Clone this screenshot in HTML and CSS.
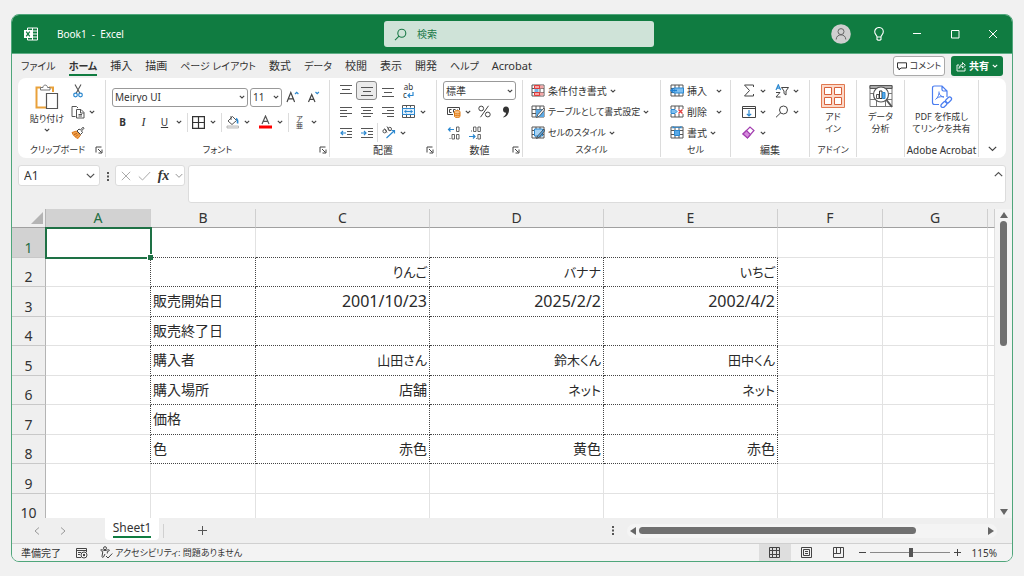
FILE: index.html
```html
<!DOCTYPE html>
<html lang="ja">
<head>
<meta charset="utf-8">
<title>Book1 - Excel</title>
<meta name="viewport" content="width=device-width, initial-scale=1">
<link rel="stylesheet" href="styles.css">
</head>
<body>
<svg class="defs" aria-hidden="true">
  <symbol id="chev" viewBox="0 0 6 4"><path d="M.8 .8 3 3 5.2 .8" fill="none" stroke="currentColor" stroke-width="1.1"/></symbol>
  <symbol id="launch" viewBox="0 0 8 8"><path d="M1 6.5V1h5.5M3 3l3.5 3.5M7 3.5V7H3.5" fill="none" stroke="#444" stroke-width="1"/></symbol>
  <symbol id="gridpad" viewBox="0 0 14 13"><path d="M1 1h12v11H1zM1 4.5h12M1 8.5h12M5 1v11M9 1v11" fill="#fff" stroke="#555"/></symbol>
</svg>
<div class="window">
  <header class="titlebar">
    <div class="title">
      <svg width="14" height="14" viewBox="0 0 14 14"><path d="M3.5 1h10v12h-10zM8.5 1v12M3.5 4h10M3.5 7h10M3.5 10h10" fill="none" stroke="#fff"/><path d="M0 3h8v8H0z" fill="#fff"/><path d="M2.2 4.6 5.8 9.4M5.8 4.6 2.2 9.4" stroke="#107c41" stroke-width="1.2"/></svg>
      <h1>Book1&nbsp; -&nbsp; Excel</h1>
    </div>
    <label class="search">
      <svg width="13" height="13" viewBox="0 0 13 13"><path d="M5 8.2 1 12.2" /><circle cx="7.8" cy="5.2" r="4"/></svg>
      <input type="search" placeholder="検索" aria-label="検索">
    </label>
    <div class="syscontrols">
      <button aria-label="アカウント"><svg width="20" height="20" viewBox="0 0 20 20"><circle cx="10" cy="10" r="9.8" fill="#cfcfcf"/><circle cx="10" cy="7.6" r="3" fill="none" stroke="#666"/><path d="M5.2 15.5c0-6.200 9.600-6.200 9.600 0" fill="none" stroke="#666"/></svg></button>
      <button aria-label="ヒント"><svg width="12" height="14" viewBox="0 0 12 14"><path d="M4 10C4 8 1.700 7.500 1.700 4.800a4.300 4.300 0 0 1 8.600 0C10.300 7.500 8 8 8 10zM4 10v2.500q2 1.500 4 0V10" fill="none" stroke="#fff" stroke-width="1.100"/></svg></button>
      <button aria-label="最小化"><svg width="10" height="10"><path d="M1 4.500h8" stroke="#fff"/></svg></button>
      <button aria-label="最大化"><svg width="10" height="10"><path d="M1.500 1.500h7.500v7.500h-7.500z" stroke="#fff" fill="none"/></svg></button>
      <button aria-label="閉じる"><svg width="10" height="10"><path d="M1 1l8 8M9 1 1 9" stroke="#fff"/></svg></button>
    </div>
  </header>

  <div class="tabs">
    <nav>
      <a href="#" class="kana">ファイル</a>
      <a href="#" class="kana current">ホーム</a>
      <a href="#">挿入</a>
      <a href="#">描画</a>
      <a href="#" class="kana">ページ レイアウト</a>
      <a href="#">数式</a>
      <a href="#" class="kana">データ</a>
      <a href="#">校閲</a>
      <a href="#">表示</a>
      <a href="#">開発</a>
      <a href="#" class="kana">ヘルプ</a>
      <a href="#">Acrobat</a>
    </nav>
    <button class="comment"><svg width="10" height="9" viewBox="0 0 10 9"><path d="M.5 .8h9v5.200H4L2 8V6H.5z" fill="none" stroke="#333"/></svg>コメント</button>
    <button class="share"><svg width="10" height="11" viewBox="0 0 10 11"><path d="M3 4H1v6h8V7M3 7.500C3 5 4.500 3.500 6.500 3.500V1.500L9.300 4.300 6.500 7V5.200C5 5.200 4 6 3 7.500z" fill="none" stroke="#fff" stroke-width=".9"/></svg>共有<svg class="chev"><use href="#chev"/></svg></button>
  </div>

  <div class="ribbon">
    <section class="group clipboard">
      <div class="tools">
        <button class="big">
          <svg width="24" height="26" viewBox="0 0 24 26"><path d="M6 3.500H1.500v20H12M14 3.500h4V8" fill="none" stroke="#e9a13a" stroke-width="2"/><path d="M5.500 6V3.500H8C8 .3 12.500 .3 12.500 3.500H15V6z" fill="#fff" stroke="#777"/><path d="M11.500 9.500h11v15h-11z" fill="#fff" stroke="#555" stroke-width="1.200"/></svg>
          <span>貼り付け</span><svg class="chev"><use href="#chev"/></svg>
        </button>
        <div class="rows">
          <div class="row"><button class="slot" aria-label="切り取り"><svg width="10" height="14" viewBox="0 0 10 14"><path d="M2 .5 7 9.500M8 .5 3 9.500" stroke="#555" stroke-width="1.100"/><circle cx="2.500" cy="11" r="1.800" fill="none" stroke="#2b88d0" stroke-width="1.200"/><circle cx="7.500" cy="11" r="1.800" fill="none" stroke="#2b88d0" stroke-width="1.200"/></svg></button></div>
          <div class="row"><button class="slot" aria-label="コピー"><svg width="14" height="14" viewBox="0 0 14 14"><path d="M4.500 11.500H1V1.500h4.500L7 3M5.500 4.500h4.500l3 3v5.500H5.500zM9.500 4.500V8H13M7.500 9.500h3.500M7.500 11h3.500" fill="none" stroke="#555"/></svg></button><button class="dd" aria-label="コピーのオプション"><svg class="chev"><use href="#chev"/></svg></button></div>
          <div class="row"><button class="slot" aria-label="書式のコピー"><svg width="14" height="13" viewBox="0 0 14 13"><path d="M1 6.500 5.500 5l4 4L7 12.500C5 12 2 9.500 1 6.500z" fill="#f3a24b" stroke="#d9791e"/><path d="M3 8.500l3-1M5 10.500l2-2" stroke="#c05f10"/><path d="M6 5l2-2 1.500 1L12 1.200 13 2.200 10.500 5l1 1.500-2 2z" fill="#fff" stroke="#444"/></svg></button></div>
        </div>
      </div>
      <div class="caption"><span>クリップボード</span><button aria-label="クリップボードの設定"><svg width="8" height="8"><use href="#launch"/></svg></button></div>
    </section>

    <section class="group font">
      <div class="tools rows">
        <div class="row">
          <label class="combo face"><select aria-label="フォント"><option>Meiryo UI</option></select><svg class="chev"><use href="#chev"/></svg></label>
          <label class="combo size"><select aria-label="フォント サイズ"><option>11</option></select><svg class="chev"><use href="#chev"/></svg></label>
          <button class="slot" aria-label="フォント サイズの拡大"><svg width="13" height="13" viewBox="0 0 13 13"><path d="M1 11 4.800 1.500 8.600 11M2.500 7.800h4.600" fill="none" stroke="#444" stroke-width="1.200"/><path d="M9 3l1.700-1.700L12.400 3" fill="none" stroke="#2b88d0" stroke-width="1.200"/></svg></button>
          <button class="slot" aria-label="フォント サイズの縮小"><svg width="13" height="13" viewBox="0 0 13 13"><path d="M1.500 11 4.700 3.500 8 11M2.800 8.400h4" fill="none" stroke="#444" stroke-width="1.200"/><path d="M8.500 1l1.700 1.700L11.900 1" fill="none" stroke="#2b88d0" stroke-width="1.200"/></svg></button>
        </div>
        <div class="row">
          <button class="slot bold">B</button><button class="slot italic">I</button><button class="slot under">U</button><button class="dd" aria-label="下線の種類"><svg class="chev"><use href="#chev"/></svg></button>
          <i class="sep"></i>
          <button class="slot" aria-label="罫線"><svg width="13" height="13"><path d="M.600 .600h11.800v11.800h-11.800zM6.500 .5v12M.5 6.500h12" fill="none" stroke="#333" stroke-width="1.200"/></svg></button><button class="dd" aria-label="罫線の種類"><svg class="chev"><use href="#chev"/></svg></button>
          <i class="sep"></i>
          <button class="slot" aria-label="塗りつぶしの色"><svg width="14" height="14" viewBox="0 0 14 14"><path d="M2 6 6.500 1.500 10.500 5.500 6 9.500z" fill="#fff" stroke="#555"/><path d="M5 1v4" stroke="#555"/><path d="M10 3.500c1.800 1 2 2.500 1.500 5" fill="none" stroke="#2b88d0" stroke-width="1.600"/><path d="M1 11h11.500v2H1z" fill="#eee" stroke="#aaa" stroke-width=".8"/></svg></button><button class="dd gap" aria-label="塗りつぶしの色の選択"><svg class="chev"><use href="#chev"/></svg></button>
          <button class="slot" aria-label="フォントの色"><svg width="13" height="14" viewBox="0 0 13 14"><path d="M3 9 6.500 1 10 9M4.200 6.400h4.600" fill="none" stroke="#555" stroke-width="1.200"/><path d="M0 10.500h13v3H0z" fill="#f00"/></svg></button><button class="dd" aria-label="フォントの色の選択"><svg class="chev"><use href="#chev"/></svg></button>
          <i class="sep"></i>
          <button class="slot ruby" aria-label="ふりがな"><span>ア</span><span>亜</span></button><button class="dd" aria-label="ふりがなの設定"><svg class="chev"><use href="#chev"/></svg></button>
        </div>
      </div>
      <div class="caption"><span>フォント</span><button aria-label="フォントの設定"><svg width="8" height="8"><use href="#launch"/></svg></button></div>
    </section>

    <section class="group align">
      <div class="tools rows">
        <div class="row">
          <button class="slot" aria-label="上揃え"><svg width="12" height="12"><path d="M0 .5h12M2 4.500h8M0 8.500h12" stroke="#555"/></svg></button>
          <button class="slot on" aria-label="上下中央揃え"><svg width="12" height="12"><path d="M0 2.500h12M2 6.500h8M0 10.500h12" stroke="#555"/></svg></button>
          <button class="slot" aria-label="下揃え"><svg width="12" height="12"><path d="M0 3.500h12M2 7.500h8M0 11.500h12" stroke="#555"/></svg></button>
          <button class="slot wrap" aria-label="折り返して全体を表示する"><span>ab</span><span>c<svg width="7" height="6" viewBox="0 0 7 6"><path d="M6 0v3.500H1M3 1.500l-2 2 2 2" fill="none" stroke="#2b88d0" stroke-width="1.200"/></svg></span></button>
        </div>
        <div class="row">
          <button class="slot" aria-label="左揃え"><svg width="12" height="12"><path d="M0 1.500h12M0 4.500h7M0 7.500h12M0 10.500h7" stroke="#555"/></svg></button>
          <button class="slot" aria-label="中央揃え"><svg width="12" height="12"><path d="M0 1.500h12M2 4.500h8M0 7.500h12M2 10.500h8" stroke="#555"/></svg></button>
          <button class="slot" aria-label="右揃え"><svg width="12" height="12"><path d="M0 1.500h12M5 4.500h7M0 7.500h12M5 10.500h7" stroke="#555"/></svg></button>
          <button class="slot" aria-label="セルを結合して中央揃え"><svg width="13" height="13" viewBox="0 0 13 13"><path d="M.5 .5h12v12H.5zM4.500 .5v2M8.500 .5v2M4.500 10v2M8.500 10v2" fill="#fff" stroke="#555"/><path d="M.5 3.500h12v6H.5z" fill="#e5f1fb" stroke="#2b88d0"/><path d="M2.500 6.500h8M4.500 4.800 2.800 6.500l1.700 1.700M8.500 4.800l1.700 1.700-1.700 1.700" fill="none" stroke="#2b88d0"/></svg></button><button class="dd" aria-label="結合のオプション"><svg class="chev"><use href="#chev"/></svg></button>
        </div>
        <div class="row">
          <button class="slot" aria-label="インデントを減らす"><svg width="12" height="12"><path d="M0 1.500h12M7 4.500h5M7 7.500h5M0 10.500h12" stroke="#555"/><path d="M6 6H1M3 4 1 6l2 2" fill="none" stroke="#2b88d0" stroke-width="1.200"/></svg></button>
          <button class="slot" aria-label="インデントを増やす"><svg width="12" height="12"><path d="M0 1.500h12M7 4.500h5M7 7.500h5M0 10.500h12" stroke="#555"/><path d="M0 6h5M3 4l2 2-2 2" fill="none" stroke="#2b88d0" stroke-width="1.200"/></svg></button>
          <i class="sep tight"></i>
          <button class="slot" aria-label="方向"><svg width="14" height="13" viewBox="0 0 14 13"><circle cx="2.600" cy="5.200" r="1.700" fill="none" stroke="#555"/><path d="M2.500 2.500 5 6.500" stroke="#555"/><path d="M5 .5 7.800 5" stroke="#555"/><circle cx="7.800" cy="3" r="1.700" fill="none" stroke="#555"/><path d="M4.500 12 12.500 4.500M9.500 4.500h3v3" fill="none" stroke="#2b88d0" stroke-width="1.200"/></svg></button><button class="dd" aria-label="方向のオプション"><svg class="chev"><use href="#chev"/></svg></button>
        </div>
      </div>
      <div class="caption"><span>配置</span><button aria-label="配置の設定"><svg width="8" height="8"><use href="#launch"/></svg></button></div>
    </section>

    <section class="group number">
      <div class="tools rows">
        <div class="row"><label class="combo format"><select aria-label="表示形式"><option>標準</option></select><svg class="chev"><use href="#chev"/></svg></label></div>
        <div class="row">
          <button class="slot" aria-label="通貨表示形式"><svg width="14" height="12" viewBox="0 0 14 12"><path class="line" d="M6 8.500H.5v-7h12V4M4.500 3.500h-2v3h2M6.500 6.500v-3h2M10.500 3.500v1"/><path d="M7.500 5.500c0-1.200 5.500-1.200 5.500 0v5c0 1.300-5.500 1.300-5.500 0z" fill="#f7c48b" stroke="#e07b14"/><path d="M7.500 7.200c1 .9 4.500.9 5.500 0M7.500 9c1 .9 4.500.9 5.500 0" fill="none" stroke="#e07b14"/></svg></button><button class="dd" aria-label="通貨の種類"><svg class="chev"><use href="#chev"/></svg></button>
          <button class="slot" aria-label="パーセント"><svg width="13" height="13" viewBox="0 0 13 13"><circle class="line" cx="3.200" cy="3.500" r="2.400"/><circle class="line" cx="9.800" cy="9.500" r="2.400"/><path class="line" d="M10.500 .8 2.500 12.200"/></svg></button>
          <button class="slot" aria-label="桁区切り"><svg width="8" height="12" viewBox="0 0 8 12"><path d="M4 .5c2 0 3 1.300 3 3.200C7 7.500 5 10.500 1.500 11.500L1.200 11C3 10 4 8.500 4 6.800 2 6.800 1 5.500 1 3.700S2 .5 4 .5z" fill="#333"/></svg></button>
        </div>
        <div class="row">
          <button class="slot" aria-label="小数点以下の桁数を増やす"><svg width="14" height="14" viewBox="0 0 14 14"><path d="M7 3.500H1.500M3.500 1.500l-2 2 2 2" fill="none" stroke="#2b88d0" stroke-width="1.200"/><path d="M9.500 1h2.500v4.500H9.500zM5 8.500h2.500V13H5zM9.500 8.500h2.500V13H9.500zM2.500 12.500h1" fill="none" stroke="#555" stroke-width=".9"/></svg></button>
          <button class="slot" aria-label="小数点以下の桁数を減らす"><svg width="14" height="14" viewBox="0 0 14 14"><path d="M1 10.500h6M5 8.500l2 2-2 2" fill="none" stroke="#2b88d0" stroke-width="1.200"/><path d="M5.500 1H8v4.500H5.500zM9.900 1h2.500v4.500H9.900zM9.900 8.500h2.500V13H9.900zM3 5h1M8 12.500h.8" fill="none" stroke="#555" stroke-width=".9"/></svg></button>
        </div>
      </div>
      <div class="caption"><span>数値</span><button aria-label="数値の設定"><svg width="8" height="8"><use href="#launch"/></svg></button></div>
    </section>

    <section class="group styles">
      <div class="tools rows">
        <div class="row"><button class="item"><svg width="14" height="13" viewBox="0 0 14 13"><use href="#gridpad"/><path d="M3.500 1.500h5v3h-5zM3.500 8.500h5v3h-5z" fill="#f6a6a6" stroke="#e03c3c"/><path d="M3.500 5h4v3h-4z" fill="#74b5e8"/><path d="M9 1.500h3.500v3H9zM9 8.500h3.500v3H9z" fill="#f6a6a6"/></svg>条件付き書式<svg class="chev"><use href="#chev"/></svg></button></div>
        <div class="row"><button class="item compact"><svg width="14" height="13" viewBox="0 0 14 13"><use href="#gridpad"/><path d="M5 4.500h8v7.500H5z" fill="#5aa9e6"/><path d="M13 3 7 9.500 5.500 12.500 8.500 11 13.500 5z" fill="#fff" stroke="#444" stroke-width=".8"/></svg>テーブルとして書式設定<svg class="chev"><use href="#chev"/></svg></button></div>
        <div class="row"><button class="item compact"><svg width="14" height="13" viewBox="0 0 14 13"><use href="#gridpad"/><path d="M3.500 3h8v7h-8z" fill="#a8d3f3" stroke="#2b88d0"/><path d="M13 3 7 9.500 5.500 12.500 8.500 11 13.500 5z" fill="#5aa9e6" stroke="#444" stroke-width=".8"/></svg>セルのスタイル<svg class="chev"><use href="#chev"/></svg></button></div>
      </div>
      <div class="caption"><span>スタイル</span></div>
    </section>

    <section class="group cells">
      <div class="tools rows">
        <div class="row"><button class="item spread"><svg width="14" height="13" viewBox="0 0 14 13"><use href="#gridpad"/><path d="M4 4h9.500v5H4z" fill="#7fbff0" stroke="#2b88d0"/><path d="M7 6.500H1M3.500 4 1 6.500 3.500 9" fill="none" stroke="#1f7fd0" stroke-width="1.300"/></svg><span>挿入</span><svg class="chev"><use href="#chev"/></svg></button></div>
        <div class="row"><button class="item spread"><svg width="14" height="13" viewBox="0 0 14 13"><use href="#gridpad"/><path d="M0 4h14v5H0z" fill="#fff"/><path d="M1 4.500h4L7 6.500 5 8.500H1z" fill="#7fbff0" stroke="#2b88d0"/><path d="M8.500 4.500l4 4M12.500 4.500l-4 4" stroke="#e03c3c" stroke-width="1.400"/></svg><span>削除</span><svg class="chev"><use href="#chev"/></svg></button></div>
        <div class="row"><button class="item"><svg width="14" height="13" viewBox="0 0 14 13"><use href="#gridpad"/><path d="M4.500 4.500h5v5h-5z" fill="#5aa9e6" stroke="#2b88d0"/><path d="M3 0v2.500M11 0v2.500M3 1.300h8" stroke="#2b88d0"/></svg><span>書式</span><svg class="chev"><use href="#chev"/></svg></button></div>
      </div>
      <div class="caption"><span>セル</span></div>
    </section>

    <section class="group editing">
      <div class="tools rows">
        <div class="row">
          <button class="slot" aria-label="オート SUM"><svg width="12" height="13" viewBox="0 0 12 13"><path class="line" d="M10.500 3V1h-9L6.500 6.500l-5 5.500h9v-2"/></svg></button><button class="dd gap" aria-label="集計の種類"><svg class="chev"><use href="#chev"/></svg></button>
          <button class="slot" aria-label="並べ替えとフィルター"><svg width="14" height="14" viewBox="0 0 14 14"><path d="M1 6 3.300 .8 5.600 6M1.800 4.200h3" fill="none" stroke="#2b88d0" stroke-width="1.200"/><path class="line" d="M1 8.500h4L1 13h4.500M6.500 3.500h7L11 7v4l-2-1.500V7z"/></svg></button><button class="dd" aria-label="並べ替えの種類"><svg class="chev"><use href="#chev"/></svg></button>
        </div>
        <div class="row">
          <button class="slot" aria-label="フィル"><svg width="14" height="12" viewBox="0 0 14 12"><path class="line" d="M.5 .5h13v11H.5zM.5 2.500h13"/><path d="M7 4v6M4.800 7.800 7 10l2.200-2.200" fill="none" stroke="#2b88d0" stroke-width="1.200"/></svg></button><button class="dd gap" aria-label="フィルのオプション"><svg class="chev"><use href="#chev"/></svg></button>
          <button class="slot" aria-label="検索と選択"><svg width="14" height="13" viewBox="0 0 14 13"><circle class="line" cx="8.500" cy="5" r="4"/><path class="line" d="M5.700 7.800 1 12.300"/></svg></button><button class="dd" aria-label="検索のオプション"><svg class="chev"><use href="#chev"/></svg></button>
        </div>
        <div class="row">
          <button class="slot" aria-label="クリア"><svg width="14" height="13" viewBox="0 0 14 13"><path d="M1 8 8 1l4 3.500L5.500 12z" fill="#fff" stroke="#a33fb0" stroke-width="1.200"/><path d="M1 8l3.500-3.500L8.500 8.500 5.500 12z" fill="#d58bdd" stroke="#a33fb0" stroke-width="1.200"/></svg></button><button class="dd" aria-label="クリアのオプション"><svg class="chev"><use href="#chev"/></svg></button>
        </div>
      </div>
      <div class="caption"><span>編集</span></div>
    </section>

    <section class="group">
      <div class="tools"><button class="big">
        <svg width="24" height="24" viewBox="0 0 24 24"><path d="M.5 .5h23v23H.5z" fill="#fbd9c9" stroke="#e07850"/><path d="M3.500 3.500h7v7h-7zM13.500 3.500h7v7h-7zM3.500 13.500h7v7h-7zM13.500 13.500h7v7h-7z" fill="#fff" stroke="#d9603a"/></svg>
        <span>アド<br>イン</span></button></div>
      <div class="caption"><span>アドイン</span></div>
    </section>

    <section class="group">
      <div class="tools"><button class="big">
        <svg width="24" height="24" viewBox="0 0 24 24"><path d="M1 1.500h22v21H1zM1 9.500h22M1 15.500h22M7.500 1v21M16.500 1v21" fill="#fff" stroke="#777"/><path d="M1 1.500h22v3H1z" fill="#aaa" stroke="#555"/><circle cx="12" cy="10.500" r="7.500" fill="#fff" stroke="#555" stroke-width="1.200"/><path d="M7.500 10.500H10v4H7.500z" fill="#fff" stroke="#555"/><path d="M10.500 7h2.500v7.500h-2.500z" fill="#fff" stroke="#333"/><path d="M13.500 8.500H16v6h-2.500z" fill="#5aa9e6" stroke="#2b88d0"/><path d="M17.500 16 23 23" stroke="#555" stroke-width="2"/></svg>
        <span>データ<br>分析</span></button></div>
      <div class="caption"></div>
    </section>

    <section class="group">
      <div class="tools"><button class="big">
        <svg width="22" height="24" viewBox="0 0 22 24"><path d="M8 20.500H3.500Q1.500 20.500 1.500 18.500V4Q1.500 2 3.500 2H11l5 5v6M11 2v3.500Q11 7 12.500 7H16" fill="none" stroke="#4a7df0" stroke-width="1.200"/><path d="M4.500 15.500C7 13.500 8.500 10 8 7.500M8 9c.8 2.500 3 4 5 4M6 14c2-1.200 4.500-1.800 7-1" fill="none" stroke="#4a7df0"/><g fill="none" stroke="#4a7df0" stroke-width="1.200"><rect x="-3.500" y="-1.900" width="7" height="3.800" rx="1.900" transform="translate(13 20.500) rotate(-45)"/><rect x="-3.500" y="-1.900" width="7" height="3.800" rx="1.900" transform="translate(17.500 16) rotate(-45)"/></g></svg>
        <span>PDF を作成し<br>てリンクを共有</span></button></div>
      <div class="caption latin"><span>Adobe Acrobat</span></div>
    </section>

    <button class="collapse" aria-label="リボンを折りたたむ"><svg width="9" height="6" viewBox="0 0 9 6"><path d="M.8 .8 4.500 4.500 8.200 .8" fill="none" stroke="#444" stroke-width="1.200"/></svg></button>
  </div>

  <div class="formulabar">
    <div class="namebox"><input type="text" value="A1" aria-label="名前ボックス"><button aria-label="名前の一覧"><svg width="9" height="6" viewBox="0 0 9 6"><path d="M.8 .8 4.500 4.500 8.200 .8"/></svg></button></div>
    <svg class="dots" width="3" height="9"><path d="M0 0h2v2H0zM0 3.500h2v2H0zM0 7h2v2H0z" fill="#555"/></svg>
    <div class="fx">
      <button aria-label="キャンセル"><svg width="10" height="10"><path d="M.8 .8l8.400 8.400M9.200 .8.8 9.200" stroke="#aaa"/></svg></button>
      <button aria-label="入力"><svg width="13" height="10"><path d="M.8 5.500 4.500 9 12.200 1" fill="none" stroke="#aaa"/></svg></button>
      <button class="fn" aria-label="関数の挿入">fx</button>
      <button class="narrow" aria-label="関数の一覧"><svg width="8" height="6" viewBox="0 0 9 6"><path d="M.8 .8 4.500 4.500 8.200 .8" fill="none" stroke="#888"/></svg></button>
    </div>
    <div class="formula"><textarea aria-label="数式バー"></textarea><button aria-label="数式バーの折りたたみ"><svg width="9" height="6" viewBox="0 0 9 6"><path d="M.8 5.200 4.500 1.500 8.200 5.200" fill="none" stroke="#555" stroke-width="1.200"/></svg></button></div>
  </div>

  <div class="sheet">
    <div class="viewport">
      <table>
        <colgroup><col class="c-head"><col class="c-narrow"><col class="c-narrow"><col class="c-wide"><col class="c-wide"><col class="c-wide"><col class="c-narrow"><col class="c-narrow"><col></colgroup>
        <thead><tr><th class="corner" aria-label="すべて選択"><svg width="12" height="12"><path d="M12 0v12H0z" fill="#b4b4b4"/></svg></th><th class="sel">A</th><th>B</th><th>C</th><th>D</th><th>E</th><th>F</th><th>G</th><th></th></tr></thead>
        <tbody>
          <tr class="above"><th class="sel">1</th><td class="active"></td><td></td><td></td><td></td><td></td><td></td><td></td><td></td></tr>
          <tr class="rec names"><th>2</th><td></td><td></td><td>りんご</td><td>バナナ</td><td>いちご</td><td></td><td></td><td></td></tr>
          <tr class="rec date"><th>3</th><td></td><td>販売開始日</td><td>2001/10/23</td><td>2025/2/2</td><td>2002/4/2</td><td></td><td></td><td></td></tr>
          <tr class="rec"><th>4</th><td></td><td>販売終了日</td><td></td><td></td><td></td><td></td><td></td><td></td></tr>
          <tr class="rec names"><th>5</th><td></td><td>購入者</td><td>山田さん</td><td>鈴木くん</td><td>田中くん</td><td></td><td></td><td></td></tr>
          <tr class="rec"><th>6</th><td></td><td>購入場所</td><td>店舗</td><td class="small">ネット</td><td class="small">ネット</td><td></td><td></td><td></td></tr>
          <tr class="rec"><th>7</th><td></td><td>価格</td><td></td><td></td><td></td><td></td><td></td><td></td></tr>
          <tr class="rec"><th>8</th><td></td><td>色</td><td>赤色</td><td>黄色</td><td>赤色</td><td></td><td></td><td></td></tr>
          <tr><th>9</th><td></td><td></td><td></td><td></td><td></td><td></td><td></td><td></td></tr>
          <tr><th>10</th><td></td><td></td><td></td><td></td><td></td><td></td><td></td><td></td></tr>
        </tbody>
      </table>
    </div>
    <div class="vscroll">
      <button aria-label="上へスクロール"><svg width="8" height="6"><path d="M4 0 8 6H0z"/></svg></button>
      <div class="track"><div class="thumb"></div></div>
      <button aria-label="下へスクロール"><svg width="8" height="6"><path d="M4 6 0 0h8z"/></svg></button>
    </div>
  </div>

  <div class="sheettabs">
    <div class="nav"><button aria-label="前のシート"><svg width="6" height="8"><path d="M5 .5 1 4l4 3.500"/></svg></button><button aria-label="次のシート"><svg width="6" height="8"><path d="M1 .5 5 4 1 7.500"/></svg></button></div>
    <button class="sheettab"><span>Sheet1</span></button>
    <i class="tabsep"></i>
    <button class="add" aria-label="新しいシート"><svg width="9" height="9"><path d="M4.500 0v9M0 4.500h9" stroke="#555"/></svg></button>
    <svg class="dots" width="3" height="9"><path d="M0 0h2v2H0zM0 3.500h2v2H0zM0 7h2v2H0z" fill="#555"/></svg>
    <div class="hscroll">
      <button aria-label="左へスクロール"><svg width="6" height="8"><path d="M0 4 6 0v8z"/></svg></button>
      <div class="track"><div class="thumb"></div></div>
      <button aria-label="右へスクロール"><svg width="6" height="8"><path d="M6 4 0 0v8z"/></svg></button>
    </div>
  </div>

  <footer class="status">
    <span>準備完了</span>
    <button class="macro" aria-label="マクロの記録"><svg width="13" height="12" viewBox="0 0 13 12"><path d="M6 10.500H1.500v-9h10V5M1.500 3.500h10M3 5.500h3M3 7.500h2" fill="none" stroke="#444"/><circle cx="9" cy="8" r="3" fill="#fff" stroke="#444"/><circle cx="9" cy="8" r="1.200" fill="#444"/></svg></button>
    <button class="a11y"><svg width="13" height="13" viewBox="0 0 13 13"><circle cx="5" cy="2.200" r="1.500"/><path d="M.8 3.800C2 3.200 3 4.500 5 4.500s3-1.300 4.300-.5c.5.800-1 1.200-2 1.700V7.500M.8 3.800c-.2 1 1.200 1.200 2 1.900L2 10.500q.3 1.500 1.500.5L5 8M6 10l2 2 4.300-4.500"/></svg>アクセシビリティ: 問題ありません</button>
    <div class="views">
      <button class="on" aria-label="標準"><svg width="11" height="11"><path d="M.5 .5h10v10H.5zM.5 3.500h10M.5 7.500h10M3.500 .5v10M7.500 .5v10"/></svg></button>
      <button aria-label="ページ レイアウト"><svg width="11" height="11"><path d="M.5 .5h10v10H.5zM2.500 2.500h6v6h-6zM4 4.500h3M4 6.500h3"/></svg></button>
      <button aria-label="改ページ プレビュー"><svg width="11" height="11"><path d="M.5 .5h10v10H.5zM.5 6.500h7M3.500 .5v6M7.500 .5v6"/></svg></button>
    </div>
    <div class="zoom"><button aria-label="縮小"><svg width="7" height="7"><path d="M0 3.500h7"/></svg></button><input type="range" min="0" max="100" value="52" aria-label="ズーム"><button aria-label="拡大"><svg width="7" height="7"><path d="M0 3.500h7M3.500 0v7"/></svg></button><output>115%</output></div>
  </footer>
</div>
</body>
</html>
```

FILE: styles.css
```css
* { box-sizing: border-box; }

body {
  margin: 0;
  height: 100vh;
  padding: 14px 11px;
  background: #f1f1f1;
  color: #333;
  font: 10px/12px "Noto Sans", "Noto Sans CJK JP", sans-serif;
  font-feature-settings: "palt";
}

button, input, select, textarea {
  margin: 0;
  padding: 0;
  border: 0;
  background: none;
  color: inherit;
  font: inherit;
  font-feature-settings: inherit;
  outline: none;
}

button {
  display: flex;
  align-items: center;
  justify-content: center;
  white-space: nowrap;
}

svg { display: block; flex: none; }
.defs { position: absolute; width: 0; height: 0; }
.chev { width: 6px; height: 4px; color: #444; }
.line { fill: none; stroke: #444; }

.window {
  display: flex;
  flex-direction: column;
  height: 100%;
  overflow: hidden;
  border: 1px solid #4fa67b;
  border-radius: 8px;
  background: #efefef;
}

/* title bar */
.titlebar {
  display: grid;
  grid-template-columns: 372fr 270fr 358fr;
  align-items: center;
  height: 39px;
  border-bottom: 1px solid #5fae86;
  background: #107c41;
  color: #fff;
}
.title { display: flex; align-items: center; gap: 19px; padding-left: 12px; }
.title h1 { margin: 0; font-size: 10px; font-weight: 400; }
.search {
  display: flex;
  align-items: center;
  gap: 10px;
  height: 26px;
  padding: 0 10px;
  border-radius: 3px;
  background: #cfe3d8;
}
.search svg { fill: none; stroke: #1b7a48; stroke-width: 1.1; }
.search input { flex: 1; min-width: 0; }
.search input::placeholder { color: #1b7a48; opacity: 1; }
.syscontrols { display: flex; justify-content: flex-end; }
.syscontrols button { width: 38px; height: 38px; }

/* ribbon tabs */
.tabs { display: flex; align-items: center; height: 24px; padding: 0 9px; gap: 6px; }
.tabs nav { display: flex; flex: 1; gap: 13px; font-size: 11px; }
.tabs a { padding: 3px 0 2px; border-bottom: 2px solid transparent; color: #333; text-decoration: none; white-space: nowrap; }
.tabs .kana { font-size: 10px; }
.tabs .current { border-color: #107c41; font-weight: 700; }
.comment, .share { height: 20px; gap: 3px; border-radius: 3px; }
.comment { width: 52px; border: 1px solid #aaa; background: #fff; font-size: 9px; }
.share { width: 52px; background: #107c41; color: #fff; font-weight: 700; }
.share .chev { color: #fff; }

/* ribbon */
.ribbon {
  display: grid;
  grid-template-columns:
    minmax(0, 88fr) minmax(0, 224fr) minmax(0, 107fr) minmax(0, 86fr)
    minmax(0, 138fr) minmax(0, 70fr) minmax(0, 79fr) minmax(0, 47fr)
    minmax(0, 48fr) minmax(0, 74fr) minmax(0, 27fr);
  height: 80px;
  margin: 0 6px;
  padding: 2px 0 4px;
  border-radius: 8px;
  background: #fff;
}
.group { display: flex; flex-direction: column; border-right: 1px solid #dcdcdc; }
.tools { display: flex; flex: 1; }
.rows { display: flex; flex-direction: column; }
.row { display: flex; align-items: center; height: 21px; }
.slot { width: 21px; height: 19px; }
.slot.on { border: 1px solid #888; border-radius: 3px; background: #ebebeb; }
.dd { width: 8px; height: 19px; }
.gap { margin-right: 4px; }
.sep { width: 1px; height: 19px; margin-left: 4px; background: #dcdcdc; }
.sep.tight { margin-left: 0; }
.caption { display: grid; grid-template-columns: 1fr; align-items: center; height: 14px; font-size: 9px; white-space: nowrap; }
.caption > * { grid-area: 1 / 1; justify-self: center; }
.caption button { justify-self: end; padding-right: 2px; }
.caption.latin { font-size: 10px; }
.big { flex-direction: column; justify-content: flex-start; gap: 3px; width: 100%; padding-top: 4px; font-size: 9px; }

.clipboard .tools { padding-left: 9px; }
.clipboard .big { width: 40px; }
.clipboard .caption { padding-right: 8px; }
.clipboard .caption > button { margin-right: -8px; }
.font .tools { gap: 3px; padding: 6px 0 0 6px; }
.font .row { height: 22px; }
.align .tools { padding-left: 5px; }
.number .tools { padding-left: 6px; }
.number .dd { margin-right: 2px; }
.styles .tools { padding-left: 8px; }
.cells .tools { padding-left: 9px; }
.editing .tools { padding-left: 7px; }
.item { gap: 3px; }
.item.compact { font-size: 9px; }
.item.spread .chev { margin-left: 6px; }

.align .caption, .number .caption, .editing .caption { font-size: 10px; }

.combo { display: grid; align-items: center; height: 19px; border: 1px solid #999; border-radius: 3px; background: #fff; }
.combo > * { grid-area: 1 / 1; }
.combo select { width: 100%; padding-left: 2px; appearance: none; }
.combo .chev { justify-self: end; margin-right: 2px; pointer-events: none; }
.face { width: 136px; margin-right: 2px; }
.size { width: 32px; }
.format { width: 73px; }
.bold { font-weight: 700; }
.italic { font-family: "Liberation Serif", serif; font-size: 12px; font-style: italic; }
.under { text-decoration: underline; }
.ruby, .wrap { flex-direction: column; }
.ruby span { font-size: 7px; line-height: 7px; }
.wrap span { display: flex; align-items: center; height: 8px; font-size: 8px; line-height: 8px; }
.collapse { align-self: end; height: 16px; }

/* formula bar */
.formulabar { display: flex; gap: 3px; height: 38px; margin: 7px 6px 6px; }
.namebox, .fx, .formula { display: flex; border: 1px solid #dcdcdc; border-radius: 3px; background: #fff; }
.namebox, .fx { height: 21px; }
.namebox { width: 82px; padding: 0 4px 0 5px; }
.namebox input { flex: 1; min-width: 0; font-size: 12px; }
.namebox svg { fill: none; stroke: #555; stroke-width: 1.2; }
.formulabar .dots { margin: 7px 2px 0 4px; }
.fx { width: 70px; }
.fx button { flex: 1; }
.fx .narrow { flex: none; width: 11px; }
.fn { font: italic 700 14px/14px "Liberation Serif", serif; }
.formula { flex: 1; }
.formula textarea { flex: 1; padding: 4px; resize: none; }
.formula button { align-self: flex-start; width: 14px; height: 16px; }

/* worksheet */
.sheet { display: flex; flex: 1; min-height: 0; }
.viewport { flex: 1; min-width: 0; overflow: hidden; }
table { width: 100%; border-spacing: 0; table-layout: fixed; }
.c-head { width: 34px; }
.c-narrow { width: 105px; }
.c-wide { width: 174px; }
th { padding: 0; font-size: 14px; font-weight: 400; line-height: 18px; }
thead th { height: 19px; border-right: 1px solid #cfcfcf; border-bottom: 1px solid #a0a0a0; }
thead .corner { border-right-color: #b4b4b4; }
thead .corner svg { margin-left: auto; margin-right: 2px; }
thead .sel, tbody .sel { background: #d2d2d2; color: #1e6e43; }
tbody tr { height: 29px; }
tbody tr:nth-child(odd) { height: 30px; }
tbody th { vertical-align: bottom; border-right: 1px solid #b4b4b4; border-bottom: 1px solid #c8c8c8; }
td {
  height: 29px;
  padding: 0 2px 1px;
  border-right: 1px solid #e2e2e2;
  border-bottom: 1px solid #e2e2e2;
  background: #fff;
  color: #2a2a2a;
  font-size: 14px;
  line-height: 20px;
  white-space: nowrap;
}
.rec td:nth-child(n+4) { text-align: right; }
.rec td:nth-child(n+3):nth-child(-n+6),
.above td:nth-child(n+3):nth-child(-n+6) { border-bottom: 1px dotted #444; }
.rec td:nth-child(n+2):nth-child(-n+6) { border-right: 1px dotted #444; }
.date td:nth-child(n+4) { font-size: 16px; }
.names td:nth-child(n+4), .small { font-size: 13px; }
.active { position: relative; }
.active::before { content: ""; position: absolute; inset: -1px -2px -2px -1px; border: 2px solid #1e7145; }
.active::after { content: ""; position: absolute; right: -3px; bottom: -3px; width: 5px; height: 5px; border: 1px solid #fff; border-width: 1px 0 0 1px; background: #1e7145; }

.vscroll { display: flex; flex-direction: column; align-items: center; width: 17px; background: #f4f4f4; fill: #666; }
.vscroll button { width: 17px; height: 12px; }
.vscroll .track { flex: 1; width: 7px; }
.vscroll .thumb { height: 44%; border-radius: 4px; background: #707070; }

/* sheet tabs */
.sheettabs { display: flex; align-items: center; height: 25px; }
.nav { display: flex; padding-left: 12px; fill: none; stroke: #999; }
.nav button { width: 26px; height: 20px; }
.sheettab { align-self: flex-start; width: 54px; height: 22px; margin-left: 29px; border-radius: 0 0 4px 4px; background: #fff; }
.sheettab span { border-bottom: 2px solid #107c41; font-size: 12px; line-height: 16px; }
.tabsep { width: 1px; height: 14px; margin-left: 4px; background: #d0d0d0; }
.add { width: 20px; height: 20px; margin-left: 28px; }
.sheettabs > .dots { margin-left: auto; margin-right: 12px; }
.hscroll { display: flex; align-items: center; width: 37%; margin-right: 15px; border-radius: 7px; background: #f4f4f4; fill: #666; }
.hscroll button { width: 12px; height: 14px; }
.hscroll .track { flex: 1; }
.hscroll .thumb { width: 80%; height: 7px; border-radius: 4px; background: #707070; }

/* status bar */
.status { display: flex; align-items: center; height: 18px; padding-left: 9px; border-top: 1px solid #d0d0d0; background: #f3f3f3; }
.macro { margin-left: 14px; }
.a11y { gap: 2px; margin-left: 12px; font-size: 9px; }
.a11y svg { fill: none; stroke: #444; }
.views { display: flex; margin-left: auto; fill: none; stroke: #444; }
.views button { width: 32px; height: 17px; }
.views .on { background: #dedede; }
.zoom { display: flex; align-items: center; gap: 4px; padding: 0 15px 0 4px; stroke: #444; }
.zoom output { padding-left: 7px; }
.zoom input { width: 80px; height: 12px; appearance: none; background: linear-gradient(#888, #888) center / 100% 1px no-repeat; }
.zoom input::-webkit-slider-thumb { appearance: none; width: 4px; height: 9px; background: #555; }
```
